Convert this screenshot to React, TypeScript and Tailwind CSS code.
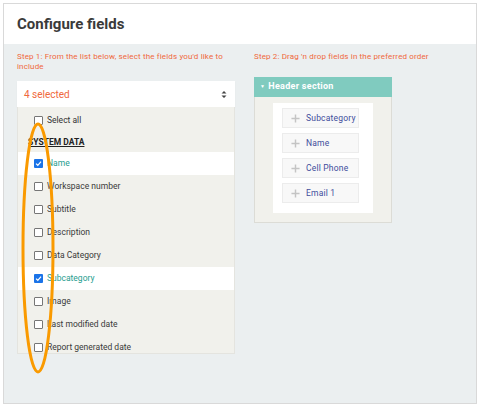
import React from "react";

type Field = { label: string; checked?: boolean };

const fields: Field[] = [
	{ label: "Name", checked: true },
	{ label: "Workspace number" },
	{ label: "Subtitle" },
	{ label: "Description" },
	{ label: "Data Category" },
	{ label: "Subcategory", checked: true },
	{ label: "Image" },
	{ label: "Last modified date" },
	{ label: "Report generated date" },
];

const ordered = ["Subcategory", "Name", "Cell Phone", "Email 1"];

function Box({ checked }: { checked?: boolean }) {
	if (checked) {
		return (
			<span className="w-[9px] h-[9px] rounded-[1px] bg-[#1a73e8] flex items-center justify-center shrink-0">
				<svg width="7" height="7" viewBox="0 0 10 10">
					<path d="M1.5 5.2 L4 7.6 L8.6 2.4" stroke="white" strokeWidth="1.8" fill="none" />
				</svg>
			</span>
		);
	}
	return <span className="w-[9px] h-[9px] rounded-[1px] border border-[#767676] bg-white shrink-0" />;
}

function Move() {
	return (
		<svg width="9" height="9" viewBox="0 0 10 10" className="shrink-0">
			<path d="M5 0.5 V9.5 M0.5 5 H9.5" stroke="#c4c4c4" strokeWidth="1.6" />
		</svg>
	);
}

export default function App() {
	return (
		<div className="w-[480px] h-[407px] bg-white p-[3px] font-['Roboto',sans-serif]">
			<div className="relative h-full border border-[#d9d9d9] flex flex-col">
				<div className="h-[40px] bg-white flex items-center px-[13px]">
					<h1 className="text-[15px] font-bold text-[#3a3a3a]">Configure fields</h1>
				</div>
				<div className="flex-1 bg-[#ebeff0] flex px-[13px] pt-[8px] gap-[19px]">
					<div className="w-[218px]">
						<p className="text-[8px] leading-[10px] text-[#f0683c] tracking-[0.15px] pr-[12px]">
							Step 1: From the list below, select the fields you'd like to include
						</p>
						<div className="mt-[9px] h-[26px] bg-white flex items-center justify-between pl-[7px] pr-[8px] shadow-[0_1px_1px_rgba(0,0,0,0.06)]">
							<span className="text-[10px] text-[#f0683c]">4 selected</span>
							<svg width="6" height="9" viewBox="0 0 6 9">
								<path d="M0.5 3.5 L3 1 L5.5 3.5 Z M0.5 5.5 L3 8 L5.5 5.5 Z" fill="#444" />
							</svg>
						</div>
						<div className="h-[247px] overflow-hidden bg-[#f1f1ec] border border-t-0 border-[#e4e4df]">
							<div className="h-[26px] flex items-center gap-[4px] pl-[16px] text-[8.5px] text-[#333]">
								<Box />
								<span>Select all</span>
							</div>
							<div className="h-[19px] flex items-center pl-[10px] text-[8.5px] font-bold text-[#222] underline">
								SYSTEM DATA
							</div>
							{fields.map((f) => (
								<div
									key={f.label}
									className={
										f.checked
											? "h-[23px] flex items-center gap-[4px] pl-[16px] text-[8.5px] bg-white text-[#1f9d8f]"
											: "h-[23px] flex items-center gap-[4px] pl-[16px] text-[8.5px] text-[#3a3a3a]"
									}
								>
									<Box checked={f.checked} />
									<span>{f.label}</span>
								</div>
							))}
						</div>
					</div>
					<div className="w-[138px]">
						<p className="text-[8px] leading-[10px] text-[#f0683c] whitespace-nowrap tracking-[0.15px]">
							Step 2: Drag 'n drop fields in the preferred order
						</p>
						<div className="mt-[15px] h-[20px] bg-[#80cbbf] flex items-center gap-[3px] pl-[6px] text-white text-[9px] font-bold tracking-[0.3px]">
							<span className="text-[5px]">▼</span>
							<span>Header section</span>
						</div>
						<div className="bg-[#f1f1ec] border border-t-0 border-[#dcdcd6] px-[18px] pt-[6px] pb-[9px]">
							<div className="bg-white pl-[9px] pr-[14px] pt-[5px] pb-[10px] flex flex-col gap-[5px]">
								{ordered.map((o) => (
									<div
										key={o}
										className="h-[20px] bg-[#f8f8f8] border border-[#ececec] flex items-center gap-[6px] pl-[8px] text-[8.5px] text-[#3f4d9c] tracking-[0.2px]"
									>
										<Move />
										<span>{o}</span>
									</div>
								))}
							</div>
						</div>
					</div>
				</div>
				<svg
					className="absolute left-[14px] top-[117px] pointer-events-none"
					width="40"
					height="254"
					viewBox="0 0 40 254"
				>
					<ellipse cx="20" cy="127" rx="15" ry="124" fill="none" stroke="#fa9a00" strokeWidth="3" />
				</svg>
			</div>
		</div>
	);
}
